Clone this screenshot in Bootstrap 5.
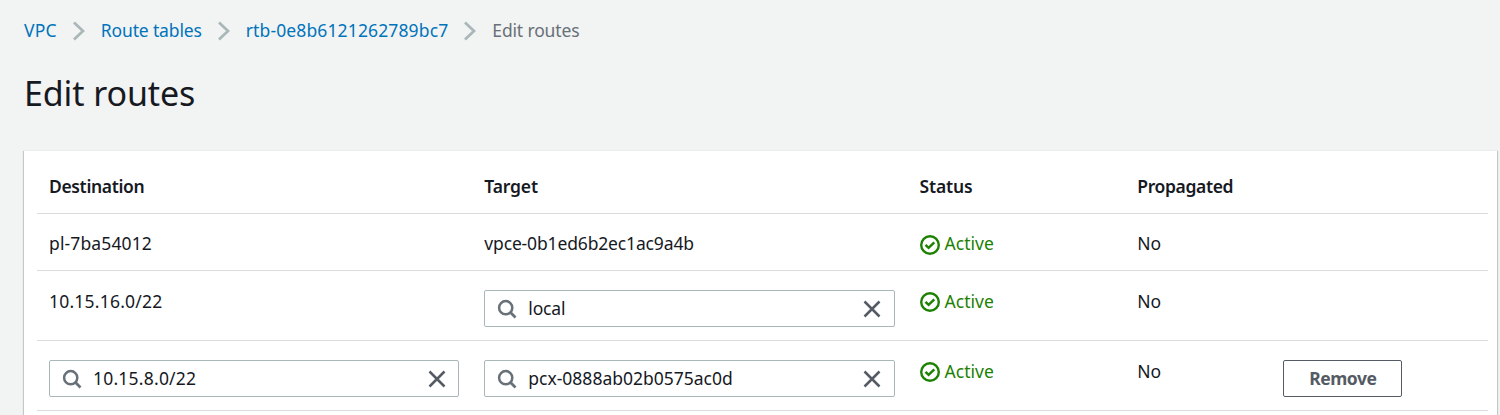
<!DOCTYPE html>
<html lang="en">
<head>
<meta charset="utf-8">
<title>Edit routes</title>
<link href="https://cdn.jsdelivr.net/npm/bootstrap@5.3.0/dist/css/bootstrap.min.css" rel="stylesheet">
<style>
html,body{height:100%}
body{background:#f2f3f3;color:#16191f;font:17.5px/24px "Noto Sans","Open Sans",sans-serif;overflow:hidden}
.page{padding:18px 3px 0 24px;height:100%;overflow:hidden}
.crumbs{height:24px}
.crumbs a{color:#0073bb}
.crumbs svg{margin:2px 16px 0}
.crumbs .here{color:#687078}
h1{font-size:34px;line-height:44px;font-weight:400;margin:29px 0 35px;letter-spacing:-.1px}
.panel{background:#fff;border-top:1px solid #eaeded;height:300px;padding:0 9px 0 13px;box-shadow:0 1px 1px rgba(0,28,36,.3),1px 1px 1px rgba(0,28,36,.15),-1px 1px 1px rgba(0,28,36,.15)}
.routes{table-layout:fixed;width:1451px;border-collapse:separate;border-spacing:0}
.routes th,.routes td{padding:18px 12px 13px;border-bottom:1px solid #d9dddd;vertical-align:top}
.routes th{padding:23px 12px 15px;font-weight:600}
.routes td{height:57px}
.routes tr.plain td{padding-top:17px}
.field{width:410px;height:37px;margin-top:1px;border:1px solid #aab7b8;border-radius:2px;padding:0 12px}
.target .field{width:410.6px;padding-right:13px}
.field svg,.ok svg{flex:none}
.field span{margin-left:11px;margin-top:-1px}
.ok{color:#1d8102;gap:5px}
.ok svg{margin-top:1px;margin-bottom:-1px}
.plain .ok svg{margin-top:2px;margin-bottom:-2px}
.btn-remove{width:119px;height:37px;margin:1px 0 0 1px;padding:0;border:1px solid #545b64;border-radius:2px;color:#545b64;font-size:17.5px;font-weight:700;line-height:33px;letter-spacing:-.5px}
.ls-n4{letter-spacing:-.35px}
.ls-n2{letter-spacing:-.15px}
.ls-p1{letter-spacing:.13px}
.ls-p2{letter-spacing:.22px}
</style>
</head>
<body>
<svg class="d-none">
<symbol id="chev" viewBox="0 0 12 20"><path d="M1 1.5 10 10 1 18.5" fill="none" stroke="#aab7b8" stroke-width="2.7"/></symbol>
<symbol id="search" viewBox="0 0 20 20"><circle cx="8.7" cy="8.7" r="6.6" fill="none" stroke="#687078" stroke-width="2.5"/><path d="m13.3 13.3 5.2 5.2" stroke="#687078" stroke-width="2.7"/></symbol>
<symbol id="x" viewBox="0 0 18 18"><path d="m1.5 1.5 15 15m0-15-15 15" stroke="#545b64" stroke-width="2.5"/></symbol>
<symbol id="check" viewBox="0 0 20 20"><circle cx="10" cy="10" r="8.8" fill="none" stroke="#1d8102" stroke-width="2.4"/><path d="m5.5 9.8 3.1 3L14.3 7.3" fill="none" stroke="#1d8102" stroke-width="2.5"/></symbol>
</svg>
<main class="page">
<nav class="crumbs d-flex align-items-center">
<a class="text-decoration-none ls-p2">VPC</a><svg width="12" height="20"><use href="#chev"/></svg>
<a class="text-decoration-none ls-n2">Route tables</a><svg width="12" height="20"><use href="#chev"/></svg>
<a class="text-decoration-none ls-p1">rtb-0e8b6121262789bc7</a><svg width="12" height="20"><use href="#chev"/></svg>
<span class="here ls-n2">Edit routes</span>
</nav>
<h1>Edit routes</h1>
<section class="panel">
<table class="routes">
<colgroup><col style="width:30%"><col style="width:30%"><col style="width:15%"><col style="width:10%"><col style="width:15%"></colgroup>
<thead><tr><th class="ls-n4">Destination</th><th class="ls-n2">Target</th><th class="ls-n2">Status</th><th class="ls-n4">Propagated</th><th></th></tr></thead>
<tbody>
<tr class="plain">
<td class="ls-p1">pl-7ba54012</td>
<td class="ls-n2">vpce-0b1ed6b2ec1ac9a4b</td>
<td><div class="ok d-flex align-items-center"><svg width="20" height="20"><use href="#check"/></svg>Active</div></td>
<td>No</td><td></td>
</tr>
<tr>
<td class="ls-p2">10.15.16.0/22</td>
<td class="target"><div class="field d-flex align-items-center"><svg width="20" height="20"><use href="#search"/></svg><span class="flex-grow-1 ls-n2">local</span><svg width="18" height="18"><use href="#x"/></svg></div></td>
<td><div class="ok d-flex align-items-center"><svg width="20" height="20"><use href="#check"/></svg>Active</div></td>
<td>No</td><td></td>
</tr>
<tr>
<td><div class="field d-flex align-items-center"><svg width="20" height="20"><use href="#search"/></svg><span class="flex-grow-1 ls-p2">10.15.8.0/22</span><svg width="18" height="18"><use href="#x"/></svg></div></td>
<td class="target"><div class="field d-flex align-items-center"><svg width="20" height="20"><use href="#search"/></svg><span class="flex-grow-1">pcx-0888ab02b0575ac0d</span><svg width="18" height="18"><use href="#x"/></svg></div></td>
<td><div class="ok d-flex align-items-center"><svg width="20" height="20"><use href="#check"/></svg>Active</div></td>
<td>No</td>
<td><button class="btn btn-remove">Remove</button></td>
</tr>
</tbody>
</table>
</section>
</main>
<script src="https://cdn.jsdelivr.net/npm/bootstrap@5.3.0/dist/js/bootstrap.bundle.min.js"></script>
</body>
</html>
